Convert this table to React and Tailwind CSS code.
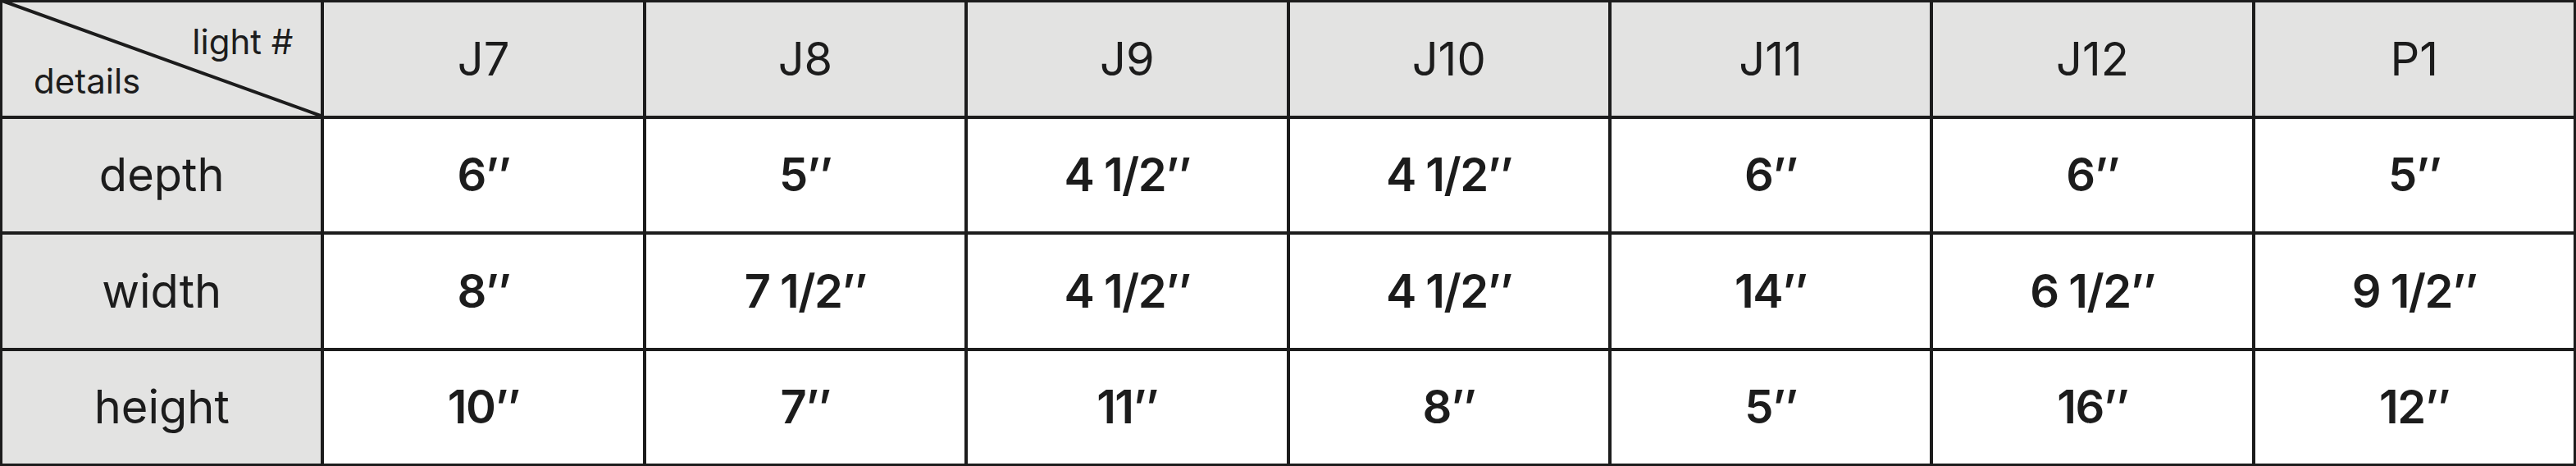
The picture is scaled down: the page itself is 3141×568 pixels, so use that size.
const cols = ["J7", "J8", "J9", "J10", "J11", "J12", "P1"];

const rows = [
  { label: "depth", values: ["6’’", "5’’", "4 1/2’’", "4 1/2’’", "6’’", "6’’", "5’’"] },
  { label: "width", values: ["8’’", "7 1/2’’", "4 1/2’’", "4 1/2’’", "14’’", "6 1/2’’", "9 1/2’’"] },
  { label: "height", values: ["10’’", "7’’", "11’’", "8’’", "5’’", "16’’", "12’’"] },
];

function CornerCell() {
  return (
    <div className="relative bg-[#e3e3e2] flex flex-col pt-[27px] text-[42px] leading-none">
      <svg
        className="absolute -left-[3px] -top-[3px] w-[calc(100%+4px)] h-[calc(100%+4px)]"
        viewBox="0 0 100 100"
        preserveAspectRatio="none"
      >
        <line x1="0" y1="0" x2="100" y2="100" stroke="#1c1c1c" strokeWidth="4" vectorEffect="non-scaling-stroke" />
      </svg>
      <span className="self-end pr-[34px]">light #</span>
      <span className="self-start pl-[38px] mt-[6px]">details</span>
    </div>
  );
}

export default function App() {
  return (
    <div
      className="grid grid-cols-8 grid-rows-4 w-[3141px] h-[568px] bg-[#1c1c1c] gap-[4px] p-[3px] text-[#1c1c1c]"
      style={{ fontFamily: "Inter, 'Noto Sans', sans-serif" }}
    >
      <CornerCell />
      {cols.map((c) => (
        <div key={c} className="bg-[#e3e3e2] flex items-center justify-center text-[56px]">
          {c}
        </div>
      ))}
      {rows.map((r) => (
        <>
          <div key={r.label} className="bg-[#e3e3e2] flex items-center justify-center text-[56px]">
            {r.label}
          </div>
          {r.values.map((v, i) => (
            <div key={r.label + i} className="bg-white flex items-center justify-center text-[56px] font-semibold tracking-[-1.5px]">
              {v}
            </div>
          ))}
        </>
      ))}
    </div>
  );
}
